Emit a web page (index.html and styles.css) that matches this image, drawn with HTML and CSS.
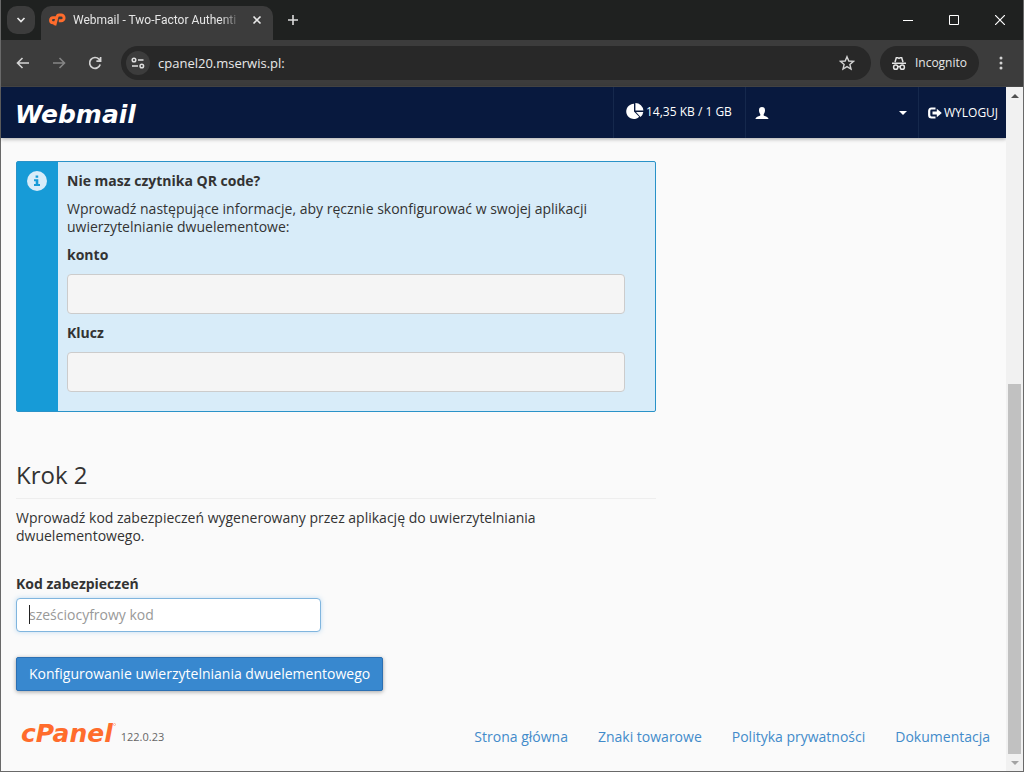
FILE: index.html
```html
<!DOCTYPE html>
<html lang="pl">
<head>
<meta charset="utf-8">
<title>Webmail - Two-Factor Authentication</title>
<link rel="stylesheet" href="styles.css">
</head>
<body>
<div class="window">
  <div class="tabstrip">
    <button class="tab-search" aria-label="Search tabs"><svg width="10" height="10" viewBox="0 0 10 10"><path d="M1.5 3 5 6.500 8.500 3" fill="none" stroke="#e8e8e8" stroke-width="1.700"/></svg></button>
    <div class="tab">
      <svg class="favicon" width="17" height="14" viewBox="0 0 17 14"><path d="M6.800 4.600H4.300A2.600 2.600 0 0 0 4 9.800H5.300M5.800 12.400 8.200 3.200Q8.600 2 10 2H12.200A2.700 2.700 0 0 1 12.200 7.800H9.800" fill="none" stroke="#ff6c2c" stroke-width="2.900"/></svg>
      <span class="tab-title">Webmail - Two-Factor Authenti</span>
      <button class="tab-close" aria-label="Close tab"><svg width="10" height="10" viewBox="0 0 10 10"><path d="M1.500 1.500 8.500 8.500M8.500 1.500 1.500 8.500" stroke="#e8e8e8" stroke-width="1.600"/></svg></button>
    </div>
    <button class="new-tab" aria-label="New tab"><svg width="12" height="12" viewBox="0 0 12 12"><path d="M6 1V11M1 6H11" stroke="#dcdcdc" stroke-width="1.600"/></svg></button>
    <div class="win-controls">
      <button aria-label="Minimize"><svg width="10" height="10"><path d="M0 5.500H10" stroke="#fff"/></svg></button>
      <button aria-label="Maximize"><svg width="10" height="10"><path d="M.5.5H9.500V9.500H.5Z" fill="none" stroke="#fff"/></svg></button>
      <button aria-label="Close"><svg width="10" height="10"><path d="M0 0 10 10M10 0 0 10" stroke="#fff" stroke-width="1.200"/></svg></button>
    </div>
  </div>
  <div class="toolbar">
    <button class="nav" aria-label="Back"><svg width="14" height="12" viewBox="0 0 14 12"><path d="M13 6H1.500M6.500 1 1.500 6 6.500 11" fill="none" stroke="#d4d4d4" stroke-width="1.600"/></svg></button>
    <button class="nav" aria-label="Forward"><svg width="14" height="12" viewBox="0 0 14 12"><path d="M1 6H12.500M7.500 1 12.500 6 7.500 11" fill="none" stroke="#858585" stroke-width="1.600"/></svg></button>
    <button class="nav" aria-label="Reload"><svg width="14" height="14" viewBox="0 0 14 14"><path d="M12.200 8.500A5.400 5.400 0 1 1 11 3.200L12.500 4.700M12.600 1V5.200H8.400" fill="none" stroke="#d4d4d4" stroke-width="1.700"/></svg></button>
    <div class="omnibox">
      <button class="site-info" aria-label="Site information"><svg width="14" height="12" viewBox="0 0 14 12"><g fill="none" stroke="#e0e0e0" stroke-width="1.500"><circle cx="3" cy="3" r="1.800"/><path d="M7 3H12.500M1 9H7"/><circle cx="10.800" cy="9" r="1.800"/></g></svg></button>
      <input class="url" type="text" aria-label="Address" value="cpanel20.mserwis.pl:">
      <button class="star" aria-label="Bookmark"><svg width="16" height="16" viewBox="0 0 16 16"><path d="M8 1.700 9.800 6 14.500 6.400 10.900 9.500 12 14 8 11.600 4 14 5.100 9.500 1.500 6.400 6.200 6Z" fill="none" stroke="#d4d4d4" stroke-width="1.400"/></svg></button>
    </div>
    <button class="incognito"><svg width="14" height="15" viewBox="0 0 14 15"><path d="M3 6 4.300 1.700H5.700L7 2.400 8.300 1.700H9.700L11 6M0 7.200H14" fill="none" stroke="#e4e4e4" stroke-width="1.500"/><g fill="none" stroke="#e4e4e4" stroke-width="1.500"><circle cx="3.700" cy="11.200" r="2.100"/><circle cx="10.300" cy="11.200" r="2.100"/><path d="M5.500 10.600H8.500"/></g></svg><span>Incognito</span></button>
    <button class="more" aria-label="Menu"><svg width="4" height="14" viewBox="0 0 4 14"><g fill="#d4d4d4"><circle cx="2" cy="2" r="1.500"/><circle cx="2" cy="7" r="1.500"/><circle cx="2" cy="12" r="1.500"/></g></svg></button>
  </div>
  <div class="viewport">
    <div class="page">
      <header class="header">
        <a class="brand" href="#">Webmail</a>
        <div class="usage"><svg width="18" height="17" viewBox="0 0 18 17"><path d="M8 .8V8.500L13.200 13.800A7.600 7.600 0 1 1 8 .8Z M9.400 0A8 8 0 0 1 17.400 7.600H9.400Z M10 8.900H17.300A8 8 0 0 1 14.500 14Z" fill="#fff"/></svg><span>14,35 KB / 1 GB</span></div>
        <button class="user" aria-label="Konto użytkownika"><svg width="14" height="14" viewBox="0 0 14 14"><path d="M7 1C9 1 10.100 2.300 10 4.500 9.900 6.500 9.300 7.300 8.700 8.200V9.400C9.500 10.300 13 10.300 13.600 13H.4C1 10.300 4.500 10.300 5.300 9.400V8.200C4.700 7.300 4.100 6.500 4 4.500 3.900 2.300 5 1 7 1Z" fill="#fff"/></svg><svg width="8" height="4" viewBox="0 0 8 4"><path d="M0 0H8L4 4Z" fill="#fff"/></svg></button>
        <a class="logout" href="#"><svg width="14" height="12" viewBox="0 0 14 12"><path d="M7.500 1.500H3.500Q1.200 1.500 1.200 4V8Q1.200 10.500 3.500 10.500H7.500" fill="none" stroke="#fff" stroke-width="2.200"/><path d="M4.500 4.400H8.800V1.800L13.800 6 8.800 10.200V7.600H4.500Z" fill="#fff"/></svg><span>WYLOGUJ</span></a>
      </header>
      <main class="content">
        <section class="callout">
          <div class="callout-side"><svg width="20" height="20" viewBox="0 0 20 20"><circle cx="10" cy="10" r="10" fill="#d8ecf9"/><path d="M8.600 4.500H11.200V6.700H8.600ZM7 8.300H11.300V13H13V15H7V13H8.700V10.200H7Z" fill="#179bd7"/></svg></div>
          <div class="callout-body">
            <strong>Nie masz czytnika QR code?</strong>
            <p>Wprowadź następujące informacje, aby ręcznie skonfigurować w swojej aplikacji uwierzytelnianie dwuelementowe:</p>
            <label for="account">konto</label>
            <input class="readonly" id="account" type="text" readonly>
            <label for="key">Klucz</label>
            <input class="readonly" id="key" type="text" readonly>
          </div>
        </section>
        <section class="step">
          <h2>Krok 2</h2>
          <p>Wprowadź kod zabezpieczeń wygenerowany przez aplikację do uwierzytelniania dwuelementowego.</p>
          <label for="code">Kod zabezpieczeń</label>
          <div class="code-field"><input id="code" type="text" placeholder="sześciocyfrowy kod"><span class="caret"></span></div>
          <button class="primary">Konfigurowanie uwierzytelniania dwuelementowego</button>
        </section>
      </main>
      <footer class="footer">
        <a class="cpanel" href="#">cPanel</a>
        <svg class="mark" width="3" height="3" viewBox="0 0 3 3"><circle cx="1.500" cy="1.500" r="1" fill="none" stroke="#ffb595"/></svg>
        <span class="version">122.0.23</span>
        <nav class="links"><a href="#">Strona główna</a><a href="#">Znaki towarowe</a><a href="#">Polityka prywatności</a><a href="#">Dokumentacja</a></nav>
      </footer>
    </div>
    <div class="scrollbar">
      <div class="arrow"><svg width="8" height="4" viewBox="0 0 8 4"><path d="M0 4H8L4 0Z" fill="#505050"/></svg></div>
      <div class="track"><div class="thumb"></div></div>
      <div class="arrow"><svg width="8" height="4" viewBox="0 0 8 4"><path d="M0 0H8L4 4Z" fill="#a3a3a3"/></svg></div>
    </div>
  </div>
</div>
</body>
</html>
```
FILE: styles.css
```css
* { box-sizing: border-box; }
body { margin: 0; font: 14px/18px "Open Sans", "Noto Sans", sans-serif; color: #333; }
button, input { font: inherit; color: inherit; margin: 0; }
button { border: 0; padding: 0; background: none; display: flex; align-items: center; justify-content: center; }
a { text-decoration: none; }
svg { display: block; flex: none; }
p { margin: 0; }

.window { min-height: 100vh; display: flex; flex-direction: column; border: 1px solid #696969; border-top: 0; background: #fafafa; }
.tabstrip { height: 40px; display: flex; background: #1f2120; padding-left: 6px; }
.tab-search { width: 28px; height: 28px; margin-top: 6px; border-radius: 10px; background: #3c3c3c; }
.tab { width: 232px; height: 34px; margin: 6px 0 0 6px; padding: 0 8px 6px 8px; display: flex; align-items: center; border-radius: 10px 10px 0 0; background: #3c3c3c; color: #e6e6e6; font: 12px/18px Roboto, sans-serif; }
.tab-title { flex: 1; min-width: 0; margin-left: 7px; white-space: nowrap; -webkit-mask-image: linear-gradient(90deg, #000 88%, transparent); mask-image: linear-gradient(90deg, #000 88%, transparent); }
.tab-close { width: 16px; height: 16px; margin-left: 8px; }
.new-tab { width: 28px; height: 28px; margin: 6px 0 0 6px; }
.win-controls { margin-left: auto; display: flex; }
.win-controls button { width: 46px; height: 40px; }

.toolbar { height: 47px; display: flex; align-items: center; padding: 0 8px 0 4px; background: #3c3c3c; border-bottom: 1px solid #484848; }
.nav { width: 36px; height: 34px; }
.omnibox { flex: 1; height: 34px; margin-left: 8px; padding: 0 15px 0 5px; display: flex; align-items: center; border-radius: 17px; background: #282828; }
.site-info { width: 24px; height: 24px; border-radius: 12px; background: #3c3c3c; }
.url { flex: 1; min-width: 0; margin-left: 8px; padding: 0; border: 0; outline: 0; background: none; color: #e8e8e8; font-size: 13px; }
.star { width: 18px; height: 24px; }
.incognito { height: 34px; margin-left: 9px; padding: 0 12px; gap: 9px; border-radius: 17px; background: #282828; color: #e6e6e6; font-size: 12px; }
.more { width: 28px; height: 34px; margin-left: 8px; }

.viewport { flex: 1; display: flex; }
.page { flex: 1; min-width: 0; display: flex; flex-direction: column; }
.header { height: 51px; display: flex; background: #08193e; color: #fff; font-size: 12px; box-shadow: 0 1px 4px rgba(0, 0, 0, .35); }
.brand, .cpanel { font: italic 700 25px/30px "DejaVu Sans", sans-serif; }
.brand { margin: 13px auto 0 14px; color: #fff; }
.header > :not(.brand) { border-left: 1px solid #15284c; display: flex; align-items: center; }
.usage { width: 132px; padding: 0 0 2px 12px; gap: 2px; }
.header .user { width: 173px; padding: 0 11px 0 9px; justify-content: space-between; }
.logout { width: 88px; padding-left: 9px; gap: 2px; color: #fff; }

.content { padding: 23px 15px 0; }
.callout, .step { max-width: 640px; }
.callout { display: flex; border: 1px solid #2992c8; border-radius: 2px; background: #d8ecf9; }
.callout-side { width: 41px; padding: 9px 0 0 10px; background: #179bd7; }
.callout-body { flex: 1; padding: 10px 30px 19px 9px; display: flex; flex-direction: column; gap: 10px; }
.callout-body label, .step label { font-weight: 700; }
.readonly { width: 100%; height: 40px; border: 1px solid #ccc; border-radius: 4px; background: #f5f5f5; }
.step { padding-top: 50px; }
.step h2 { margin: 0 0 10px; padding-bottom: 10px; border-bottom: 1px solid #eee; font-size: 24px; line-height: 26px; font-weight: 400; }
.step label { display: block; margin: 30px 0 5px; }
.code-field { position: relative; width: 305px; }
.code-field input { display: block; width: 100%; height: 34px; padding: 0 12px 2px; border: 1px solid #80b5de; border-radius: 4px; background: #fff; box-shadow: 0 0 5px rgba(102, 175, 233, .4); }
.code-field input::placeholder { color: #999; opacity: 1; }
.caret { position: absolute; left: 13px; top: 7px; width: 1px; height: 19px; background: #222; }
.primary { height: 34px; margin-top: 25px; padding: 0 12px; border: 1px solid #2c70b3; border-radius: 2px; background: #3888cf; color: #fff; box-shadow: 0 1px 4px rgba(0, 0, 0, .35); }

.footer { display: flex; align-items: center; padding: 28px 16px 0 20px; }
.cpanel { color: #ff6c2c; padding-bottom: 6px; }
.mark { align-self: flex-start; margin-top: 4px; }
.version { margin-left: 5px; font-size: 11px; color: #666; }
.links { margin-left: auto; display: flex; gap: 30px; }
.links a { color: #428bca; }

.scrollbar { width: 17px; display: flex; flex-direction: column; background: #f1f1f1; }
.arrow { height: 17px; display: flex; align-items: center; justify-content: center; }
.track { flex: 1; display: flex; flex-direction: column; justify-content: flex-end; padding: 0 2px; }
.thumb { height: 57%; background: #c1c1c1; }
```
